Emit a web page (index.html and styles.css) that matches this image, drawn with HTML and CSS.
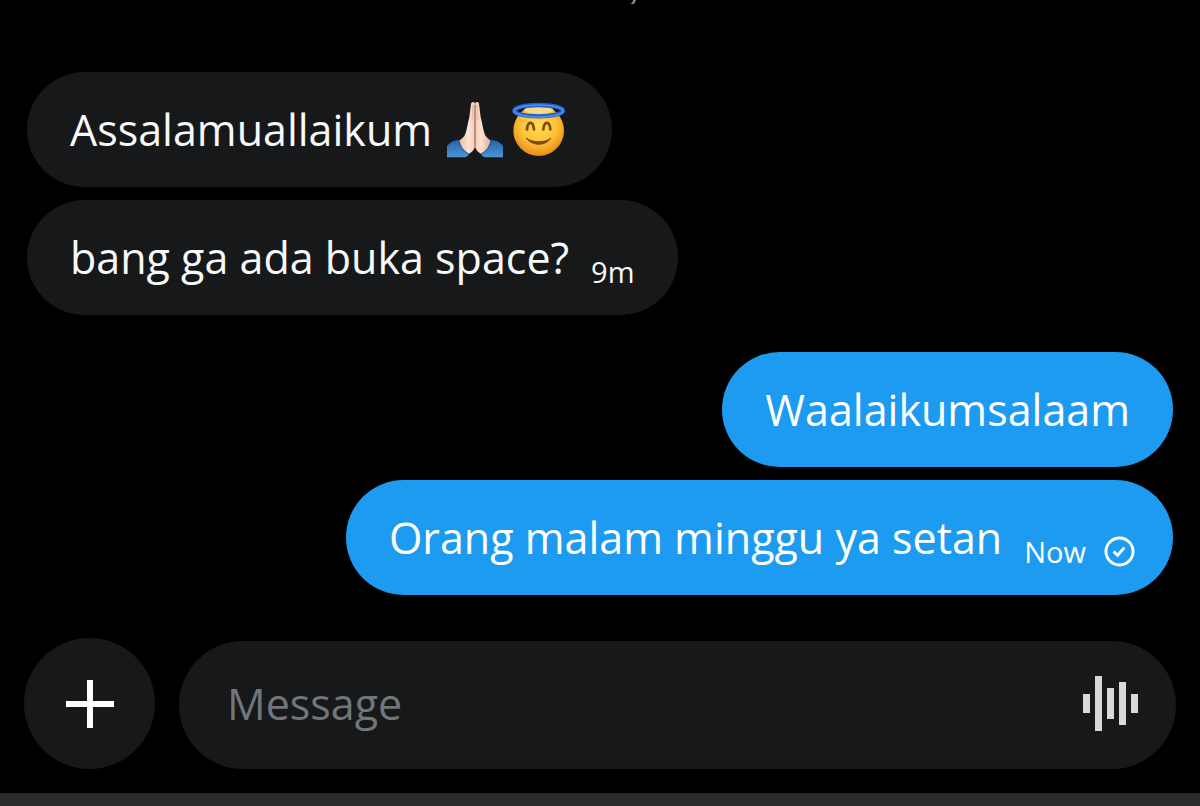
FILE: index.html
```html
<!DOCTYPE html>
<html lang="id">

<head>
    <meta charset="UTF-8">
    <meta name="viewport" content="width=device-width, initial-scale=1.0">
    <title>Messages</title>
    <link rel="stylesheet" href="styles.css">
</head>

<body>
    <div class="day"><span>Today</span></div>

    <main class="chat">
        <!-- Received -->
        <div class="group received">
            <div class="bubble">
                <p class="text">Assalamuallaikum</p>
                <span class="emojis">
                    <svg class="emoji" viewBox="0 0 168 168" role="img" aria-label="Folded hands">
                        <defs>
                            <linearGradient id="skin" x1="0" x2="1">
                                <stop offset="0" stop-color="#e6b9a0" />
                                <stop offset="0.3" stop-color="#fde4d6" />
                                <stop offset="0.48" stop-color="#f3cdb9" />
                                <stop offset="0.7" stop-color="#fbe0d2" />
                                <stop offset="1" stop-color="#dfab92" />
                            </linearGradient>
                            <linearGradient id="sleeve" x1="0" y1="0" x2="0" y2="1">
                                <stop offset="0" stop-color="#2463a8" />
                                <stop offset="1" stop-color="#4d96d8" />
                            </linearGradient>
                        </defs>
                        <path fill="url(#skin)" d="M84 5C82 -2 73 -1 72 6L67 46C62 64 60 84 54 98C48 108 41 112 36 116C41 136 50 148 64 156C74 152 81 144 84 134C87 144 94 152 104 156C118 148 127 136 132 116C127 112 120 108 114 98C108 84 106 64 101 46L96 6C95 -1 86 -2 84 5Z" />
                        <path fill="none" stroke="#94513a" stroke-width="3" d="M84 8V134" />
                        <path fill="none" stroke="#dba78f" stroke-width="2" d="M78 8L75 54M90 8L93 54" />
                        <path fill="url(#sleeve)" d="M0 132C9 121 21 114 36 114C40 134 49 148 66 156C63 163 57 166 50 166H0Z" />
                        <path fill="url(#sleeve)" d="M168 132C159 121 147 114 132 114C128 134 119 148 102 156C105 163 111 166 118 166H168Z" />
                        <path fill="none" stroke="#1d5290" stroke-width="3" d="M36 116C40 134 49 147 65 155M132 116C128 134 119 147 103 155" />
                    </svg>
                    <svg class="emoji" viewBox="0 0 168 168" role="img" aria-label="Smiling face with halo">
                        <defs>
                            <radialGradient id="face" cx="0.5" cy="0.4" r="0.6">
                                <stop offset="0" stop-color="#ffdc4c" />
                                <stop offset="0.6" stop-color="#fdc137" />
                                <stop offset="1" stop-color="#e98a17" />
                            </radialGradient>
                        </defs>
                        <circle fill="url(#face)" cx="83" cy="86" r="76" />
                        <ellipse fill="#f7db86" cx="83" cy="24" rx="44" ry="11" />
                        <ellipse fill="none" stroke="#2460d2" stroke-width="13" cx="83" cy="26" rx="73" ry="17" />
                        <ellipse fill="none" stroke="#4f92f5" stroke-width="5" cx="83" cy="27" rx="73" ry="18" />
                        <path fill="none" stroke="#7a4a12" stroke-width="8" stroke-linecap="round" d="M48 82C50 56 66 56 69 82M97 82C100 56 116 56 118 82" />
                        <path fill="#7a4a12" stroke="#7a4a12" stroke-width="3" stroke-linejoin="round" d="M46 108C62 133 104 133 120 108C105 123 61 123 46 108Z" />
                    </svg>
                </span>
            </div>
            <div class="bubble">
                <p class="text">bang ga ada buka space?</p>
                <span class="meta">9m</span>
            </div>
        </div>

        <!-- Sent -->
        <div class="group sent">
            <div class="bubble">
                <p class="text">Waalaikumsalaam</p>
            </div>
            <div class="bubble has-status">
                <p class="text">Orang malam minggu ya setan</p>
                <span class="meta">Now
                    <svg class="check" viewBox="0 0 32 32" role="img" aria-label="Sent">
                        <circle cx="16" cy="16" r="14" />
                        <path d="M10 16L14 20L21 12" />
                    </svg>
                </span>
            </div>
        </div>
    </main>

    <form class="composer">
        <button type="button" class="add" aria-label="Add">
            <svg viewBox="0 0 48 48" aria-hidden="true">
                <path d="M24 0V48M0 24H48" />
            </svg>
        </button>
        <div class="field">
            <input type="text" name="message" placeholder="Message" aria-label="Message">
            <button type="button" class="voice" aria-label="Voice message">
                <svg viewBox="0 0 55 55" aria-hidden="true">
                    <path d="M0 18H7V37H0ZM12 0H19V55H12ZM24 12H31V43H24ZM36 6H43V49H36ZM48 18H55V37H48Z" />
                </svg>
            </button>
        </div>
    </form>

    <div class="bottom-bar"></div>
</body>

</html>
```
FILE: styles.css
```css
* {
    box-sizing: border-box;
}

body {
    margin: 0;
    min-height: 100vh;
    display: flex;
    flex-direction: column;
    background-color: #000;
    color: #f7f9f9;
    font-family: "Open Sans", "Noto Sans", sans-serif;
    font-size: 43px;
    line-height: 59px;
}

/* scrolled almost out of view */
.day {
    display: flex;
    justify-content: center;
    align-items: flex-end;
    height: 4px;
    overflow: hidden;
    color: #8b9095;
    font-size: 30px;
    line-height: 32px;
}

.chat {
    flex: 1;
    display: flex;
    flex-direction: column;
    justify-content: flex-end;
    gap: 37px;
    padding: 24px 27px 43px;
}

.group {
    display: flex;
    flex-direction: column;
    align-items: flex-start;
    gap: 13px;
}

.sent {
    align-items: flex-end;
}

.bubble {
    display: flex;
    align-items: center;
    padding: 28px 43px;
    border-radius: 58px;
    background-color: #16181a;
}

.sent .bubble {
    background-color: #1d9bf0;
    color: #fff;
}

.sent .has-status {
    padding-right: 38px;
}

.text {
    margin: 0;
}

.emojis {
    display: flex;
    gap: 8px;
    margin: 0 2px 0 15px;
}

.emoji {
    width: 56px;
    height: 56px;
}

.meta {
    display: flex;
    align-items: center;
    gap: 18px;
    margin-left: 22px;
    padding-top: 28px;
    font-size: 29px;
    line-height: 31px;
}

.check {
    width: 31px;
    height: 31px;
    fill: none;
    stroke: #fff;
    stroke-width: 3;
}

.composer {
    display: flex;
    align-items: flex-end;
    gap: 24px;
    padding: 0 24px;
    margin-bottom: 24px;
}

button {
    display: flex;
    align-items: center;
    justify-content: center;
    padding: 0;
    border: none;
    background: none;
    cursor: pointer;
}

.add {
    flex-shrink: 0;
    width: 131px;
    height: 131px;
    border-radius: 50%;
    background-color: #16181a;
}

.add svg {
    width: 48px;
    height: 48px;
    stroke: #fff;
    stroke-width: 6;
}

.field {
    flex: 1;
    display: flex;
    align-items: center;
    min-width: 0;
    height: 128px;
    padding: 0 38px 3px 48px;
    border-radius: 64px;
    background-color: #16181a;
}

.field input {
    flex: 1;
    min-width: 0;
    padding: 0;
    border: none;
    outline: none;
    background: none;
    color: #f7f9f9;
    font: inherit;
}

.field input::placeholder {
    color: #71767b;
    opacity: 1;
}

.voice svg {
    width: 55px;
    height: 55px;
    fill: #d9d9dc;
}

.bottom-bar {
    height: 13px;
    background-color: #2b2b2b;
}
```
